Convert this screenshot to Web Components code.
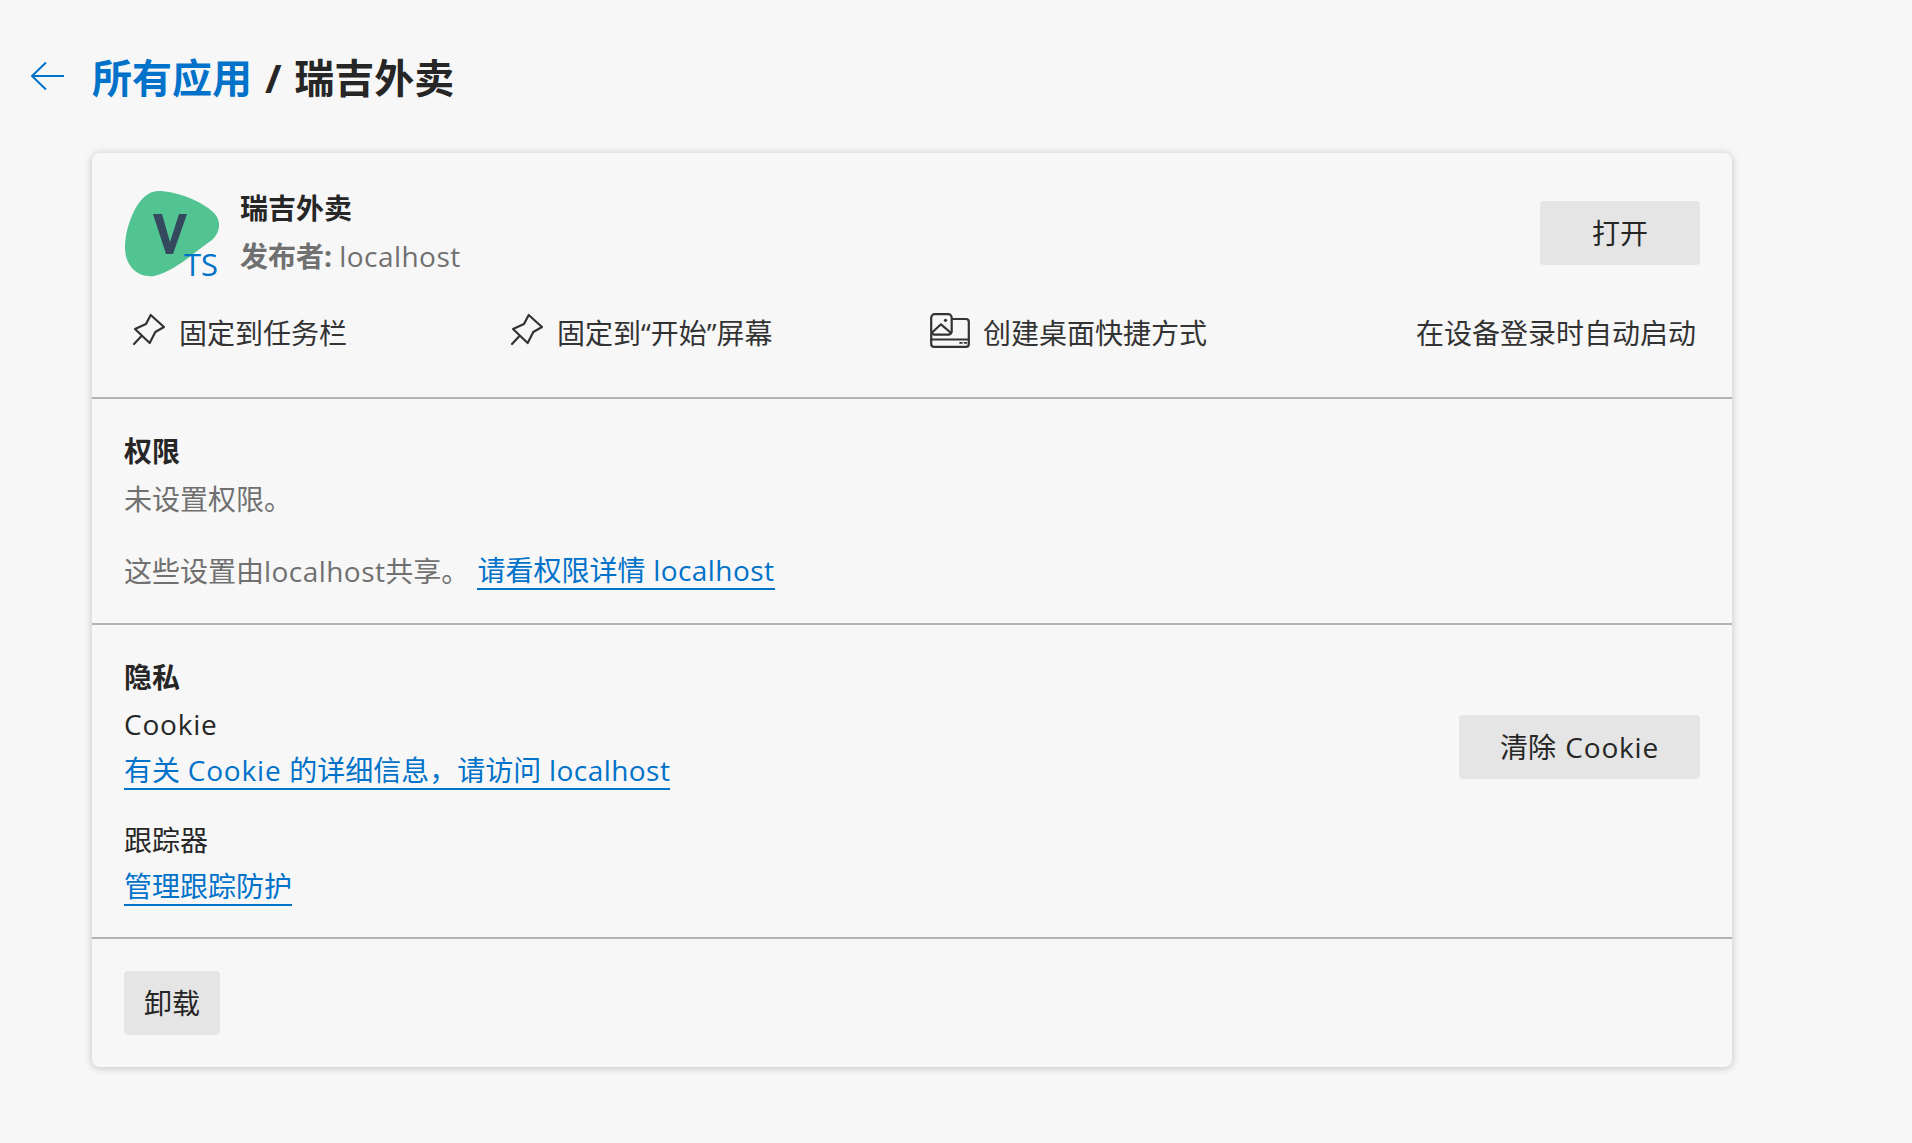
<!DOCTYPE html>
<html lang="zh">
<head>
<meta charset="utf-8">
<title>瑞吉外卖</title>
<style>
  html, body { margin: 0; background: #f7f7f7; }
  body {
    font: 28px/40px "Open Sans", "Noto Sans CJK SC", sans-serif;
    color: #262626;
    height: 1143px;
    overflow: hidden;
  }
</style>
</head>
<body>
<app-page>
  <page-title slot="title"></page-title>
  <app-card>
    <app-header></app-header>
    <card-section>
      <perm-info></perm-info>
    </card-section>
    <card-section>
      <privacy-info></privacy-info>
    </card-section>
    <card-section last>
      <ui-button narrow>卸载</ui-button>
    </card-section>
  </app-card>
</app-page>

<script>
const BLUE = '#0072c9';

const PIN = `<svg width="34" height="34" viewBox="0 0 34 34" fill="none" stroke="#333" stroke-width="2.2" stroke-linejoin="round" stroke-linecap="round">
  <path d="M18.7 2 L32 14 L23.3 19 L17.7 30 L3 16 L14 11 Z"/><path d="M9.5 23 L2 31"/></svg>`;

const SHORTCUT = `<svg width="40" height="35" viewBox="0 0 40 35" fill="none" stroke="#333" stroke-width="2.2" stroke-linejoin="round" stroke-linecap="round">
  <rect x="1.2" y="1.2" width="20.5" height="20.5" rx="3.5"/><path d="M1.5 20 L11 11.3 L21 20"/><circle cx="15.5" cy="7.3" r="1.6" fill="#333" stroke="none"/>
  <path d="M22 6 H36 Q38.8 6 38.8 9 V31 Q38.8 33.8 36 33.8 H4 Q1.2 33.8 1.2 31 V21"/><path d="M1.2 26.5 H38.8"/><path d="M30 29.8 H32 M34.5 29.8 H36.5" stroke-width="1.8"/></svg>`;

class AppPage extends HTMLElement {
  constructor() {
    super();
    this.attachShadow({ mode: 'open' });
    this.shadowRoot.innerHTML = /*html*/`
    <style>
      :host { display: block; padding: 50px 0 0 30px; }
      .body { margin: 48px 0 0 62px; width: 1640px; }
    </style>
    <slot name="title"></slot>
    <div class="body"><slot></slot></div>
    `;
  }
}

class PageTitle extends HTMLElement {
  constructor() {
    super();
    this.attachShadow({ mode: 'open' });
    this.shadowRoot.innerHTML = /*html*/`
    <style>
      :host { display: flex; align-items: center; height: 55px; }
      svg { display: block; margin: -3px 27px 0 0; }
      h1 { margin: 0; font-size: 40px; line-height: 55px; font-weight: 700; color: #262626; word-spacing: 2.5px; }
      a { color: ${BLUE}; text-decoration: none; }
    </style>
    <svg width="35" height="30" viewBox="0 0 35 30" fill="none" stroke="${BLUE}" stroke-width="2">
      <path d="M34 15 H2"/><path d="M16 1.5 L2 15 L16 28.5"/>
    </svg>
    <h1><a href="#">所有应用</a> / 瑞吉外卖</h1>
    `;
  }
}

class AppCard extends HTMLElement {
  constructor() {
    super();
    this.attachShadow({ mode: 'open' });
    this.shadowRoot.innerHTML = /*html*/`
    <style>
      :host {
        display: block;
        background: #f7f7f7;
        border-radius: 8px;
        box-shadow: 0 1px 8px rgba(0, 0, 0, .22);
      }
    </style>
    <slot></slot>
    `;
  }
}

class CardSection extends HTMLElement {
  constructor() {
    super();
    this.attachShadow({ mode: 'open' });
    this.shadowRoot.innerHTML = /*html*/`
    <style>
      :host { display: block; padding: 28px 32px; border-top: 2px solid #b3b3b3; }
      :host([last]) { padding: 32px; }
    </style>
    <slot></slot>
    `;
  }
}

class UiButton extends HTMLElement {
  constructor() {
    super();
    this.attachShadow({ mode: 'open' });
    this.shadowRoot.innerHTML = /*html*/`
    <style>
      :host {
        display: inline-flex;
        align-items: center;
        justify-content: center;
        height: 64px;
        min-width: 96px;
        padding: 0 41px;
        box-sizing: border-box;
        background: #e5e5e5;
        border-radius: 4px;
        color: #262626;
        word-spacing: 2px;
      }
      :host([narrow]) { padding: 0 20px; }
      :host([wide]) { min-width: 160px; }
    </style>
    <span><slot></slot></span>
    `;
  }
}

class UiLink extends HTMLElement {
  constructor() {
    super();
    this.attachShadow({ mode: 'open' });
    this.shadowRoot.innerHTML = /*html*/`
    <style>
      :host { display: inline-block; line-height: 36px; height: 38px; word-spacing: .5px; }
      a { display: inline-block; color: ${BLUE}; text-decoration: none; border-bottom: 2px solid ${BLUE}; }
    </style>
    <a href="#"><slot></slot></a>
    `;
  }
}

// latin runs are a bit wider in the reference font
class LatinText extends HTMLElement {
  constructor() {
    super();
    this.attachShadow({ mode: 'open' });
    // no whitespace around the slot, this element sits inside a line of text
    this.shadowRoot.innerHTML = `<style>:host { display: inline; letter-spacing: .45px; } :host([wide]) { letter-spacing: .8px; }</style><slot></slot>`;
  }
}

class ActionItem extends HTMLElement {
  constructor() {
    super();
    this.attachShadow({ mode: 'open' });
    this.shadowRoot.innerHTML = /*html*/`
    <style>
      :host { display: flex; align-items: center; column-gap: 13px; color: #333; }
      .icon { display: flex; margin-top: -6px; }
      .icon:empty { display: none; }
    </style>
    <span class="icon"></span><slot></slot>
    `;
    const kind = this.getAttribute('icon');
    if (kind) this.shadowRoot.querySelector('.icon').innerHTML = kind === 'pin' ? PIN : SHORTCUT;
  }
}

class AppHeader extends HTMLElement {
  constructor() {
    super();
    this.attachShadow({ mode: 'open' });
    this.shadowRoot.innerHTML = /*html*/`
    <style>
      :host { display: block; padding: 32px 32px 0; height: 244px; box-sizing: border-box; }
      .top { display: flex; align-items: flex-start; }
      .logo { width: 100px; height: 92px; flex: none; display: block; margin-top: 5px; overflow: visible; }
      .info { margin-left: 16px; flex: 1; }
      .name { font-weight: 700; line-height: 47px; }
      .pub { color: #707070; line-height: 48px; }
      ui-button { margin-top: 16px; }
      .actions { display: grid; grid-template-columns: 378px 420px 1fr auto; align-items: center; margin: 31px 4px 0 8px; }
    </style>
    <div class="top">
      <svg class="logo" viewBox="0 0 100 92">
        <path d="M34 1 C52 1 78 11 90 23 C98 31 96 43 88 50 C70 62 52 81 30 86 C14 88 1 76 1 58 C1 36 14 1 34 1 Z" fill="#52c491"/>
        <path d="M29 24 L38 24 L46 52 L55 24 L63 24 L49 64 L42 64 Z" fill="#34495e"/>
        <text x="60" y="86" font-family="Open Sans, sans-serif" font-size="31" fill="${BLUE}">TS</text>
      </svg>
      <div class="info">
        <div class="name">瑞吉外卖</div>
        <div class="pub"><b>发布者:</b> <latin-text>localhost</latin-text></div>
      </div>
      <ui-button wide>打开</ui-button>
    </div>
    <div class="actions">
      <action-item icon="pin">固定到任务栏</action-item>
      <action-item icon="pin">固定到“开始”屏幕</action-item>
      <action-item icon="shortcut">创建桌面快捷方式</action-item>
      <action-item>在设备登录时自动启动</action-item>
    </div>
    `;
  }
}

class PermInfo extends HTMLElement {
  constructor() {
    super();
    this.attachShadow({ mode: 'open' });
    this.shadowRoot.innerHTML = /*html*/`
    <style>
      :host { display: block; color: #707070; line-height: 48px; }
      .head { font-weight: 700; color: #262626; }
      .share { margin-top: 24px; display: flex; align-items: center; column-gap: 8px; }
    </style>
    <div class="head">权限</div>
    <div>未设置权限。</div>
    <div class="share"><span>这些设置由<latin-text>localhost</latin-text>共享。</span><ui-link>请看权限详情 <latin-text>localhost</latin-text></ui-link></div>
    `;
  }
}

class PrivacyInfo extends HTMLElement {
  constructor() {
    super();
    this.attachShadow({ mode: 'open' });
    this.shadowRoot.innerHTML = /*html*/`
    <style>
      :host { display: flex; justify-content: space-between; align-items: flex-start; }
      .head { font-weight: 700; line-height: 48px; }
      .line { line-height: 46px; height: 46px; }
      .tracker { margin-top: 24px; }
      ui-button { margin-top: 62px; }
    </style>
    <div>
      <div class="head">隐私</div>
      <div class="line"><latin-text wide>Cookie</latin-text></div>
      <div class="line"><ui-link>有关 <latin-text wide>Cookie</latin-text> 的详细信息，请访问 <latin-text>localhost</latin-text></ui-link></div>
      <div class="line tracker">跟踪器</div>
      <div class="line"><ui-link>管理跟踪防护</ui-link></div>
    </div>
    <ui-button>清除 <latin-text wide>Cookie</latin-text></ui-button>
    `;
  }
}

customElements.define('latin-text', LatinText);
customElements.define('ui-button', UiButton);
customElements.define('ui-link', UiLink);
customElements.define('action-item', ActionItem);
customElements.define('app-header', AppHeader);
customElements.define('perm-info', PermInfo);
customElements.define('privacy-info', PrivacyInfo);
customElements.define('card-section', CardSection);
customElements.define('app-card', AppCard);
customElements.define('page-title', PageTitle);
customElements.define('app-page', AppPage);
</script>
</body>
</html>
